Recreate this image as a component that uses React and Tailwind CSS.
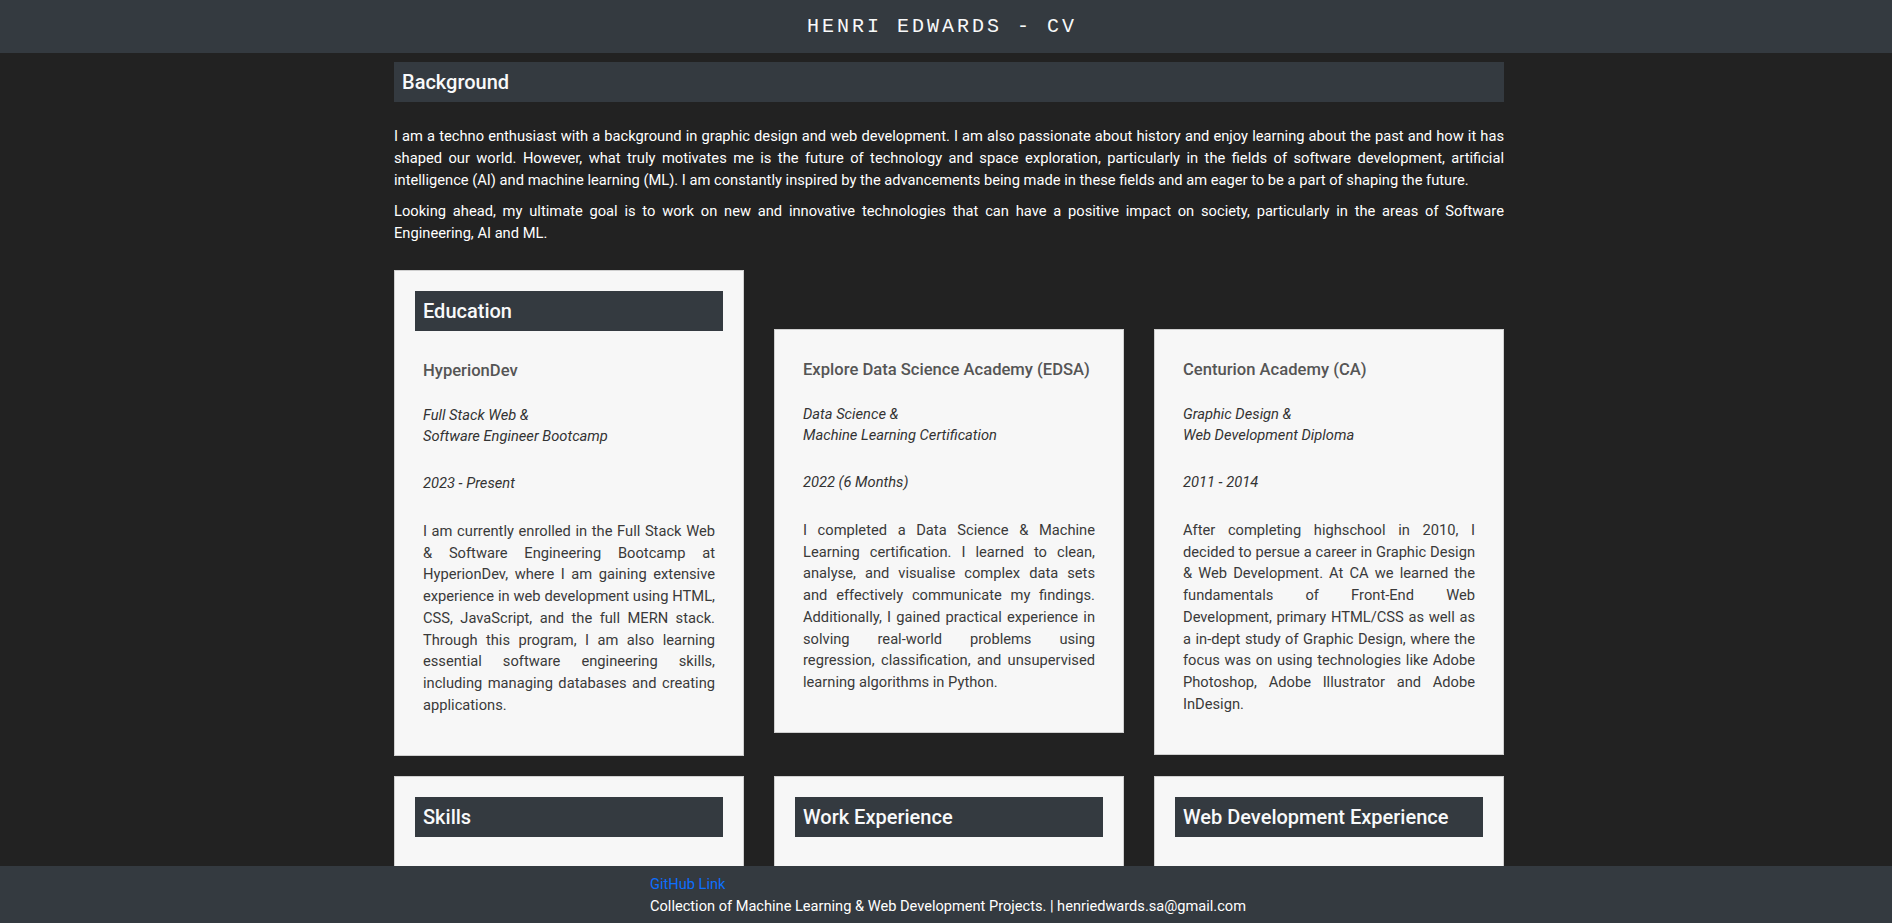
const education = [
  {
    title: "HyperionDev",
    course: ["Full Stack Web &", "Software Engineer Bootcamp"],
    date: "2023 - Present",
    text: "I am currently enrolled in the Full Stack Web & Software Engineering Bootcamp at HyperionDev, where I am gaining extensive experience in web development using HTML, CSS, JavaScript, and the full MERN stack. Through this program, I am also learning essential software engineering skills, including managing databases and creating applications.",
  },
  {
    title: "Explore Data Science Academy (EDSA)",
    course: ["Data Science &", "Machine Learning Certification"],
    date: "2022 (6 Months)",
    text: "I completed a Data Science & Machine Learning certification. I learned to clean, analyse, and visualise complex data sets and effectively communicate my findings. Additionally, I gained practical experience in solving real-world problems using regression, classification, and unsupervised learning algorithms in Python.",
  },
  {
    title: "Centurion Academy (CA)",
    course: ["Graphic Design &", "Web Development Diploma"],
    date: "2011 - 2014",
    text: "After completing highschool in 2010, I decided to persue a career in Graphic Design & Web Development. At CA we learned the fundamentals of Front-End Web Development, primary HTML/CSS as well as a in-dept study of Graphic Design, where the focus was on using technologies like Adobe Photoshop, Adobe Illustrator and Adobe InDesign.",
  },
];

const SectionBar = ({ children }) => (
  <h2 className="mb-5 flex h-10 items-center bg-[#343a40] px-2 text-[20px] font-medium text-[#f8f9fa]">
    {children}
  </h2>
);

const EduCard = ({ item, heading }) => (
  <div className={`border border-[#cfcfcf] bg-[#f7f7f7] p-5 ${heading ? "" : "mt-[59px]"}`}>
    {heading && <SectionBar>{heading}</SectionBar>}
    <div className="px-2 pt-[9px] pb-[18px]">
      <h3 className="mb-[23px] text-[16.6px] leading-[21.6px] font-medium text-[#555]">{item.title}</h3>
      <p className="mb-[26px] text-[14.7px] leading-[21px] italic text-[#333]">
        {item.course[0]}
        <br />
        {item.course[1]}
      </p>
      <p className="mb-[26px] text-[14.7px] leading-[21.75px] italic text-[#333]">{item.date}</p>
      <p className="text-justify text-[14.7px] leading-[21.75px] text-[#3a3a3a]">{item.text}</p>
    </div>
  </div>
);

const EmptyCard = ({ heading }) => (
  <div className="min-h-[140px] border border-[#cfcfcf] bg-[#f7f7f7] p-5">
    <SectionBar>{heading}</SectionBar>
  </div>
);

export default function App() {
  return (
    <div className="flex h-[923px] flex-col overflow-hidden bg-[#222] font-['Roboto',sans-serif]">
      <header className="flex h-[53px] shrink-0 items-center justify-center bg-[#343a40]">
        <h1 className="-translate-x-[4px] font-['Liberation_Mono',monospace] text-[20px] tracking-[3px] text-[#f8f9fa]">
          HENRI EDWARDS - CV
        </h1>
      </header>

      <main className="flex-1 overflow-hidden">
        <div className="mx-auto w-[1110px] translate-x-[3px] pt-[9px]">
          <div className="mb-6 flex h-10 items-center bg-[#343a40] px-2 text-[20px] font-medium text-[#f8f9fa]">
            Background
          </div>
          <p className="mb-[9.5px] text-justify text-[14.7px] leading-[21.8px] text-white">
            I am a techno enthusiast with a background in graphic design and web development. I am also passionate about
            history and enjoy learning about the past and how it has shaped our world. However, what truly motivates me is
            the future of technology and space exploration, particularly in the fields of software development, artificial
            intelligence (AI) and machine learning (ML). I am constantly inspired by the advancements being made in these
            fields and am eager to be a part of shaping the future.
          </p>
          <p className="mb-[26px] text-justify text-[14.7px] leading-[21.8px] text-white">
            Looking ahead, my ultimate goal is to work on new and innovative technologies that can have a positive impact
            on society, particularly in the areas of Software Engineering, AI and ML.
          </p>

          <div className="grid grid-cols-3 items-start gap-x-[30px] gap-y-5">
            <EduCard item={education[0]} heading="Education" />
            <EduCard item={education[1]} />
            <EduCard item={education[2]} />
            <EmptyCard heading="Skills" />
            <EmptyCard heading="Work Experience" />
            <EmptyCard heading="Web Development Experience" />
          </div>
        </div>
      </main>

      <footer className="flex h-[57px] shrink-0 justify-center bg-[#343a40] pt-[7px]">
        <div className="translate-x-[2px] text-[14.6px] leading-[22px]">
          <a href="#" className="block text-[#0d6efd]">
            GitHub Link
          </a>
          <p className="text-white">Collection of Machine Learning &amp; Web Development Projects. | henriedwards.sa@gmail.com</p>
        </div>
      </footer>
    </div>
  );
}
